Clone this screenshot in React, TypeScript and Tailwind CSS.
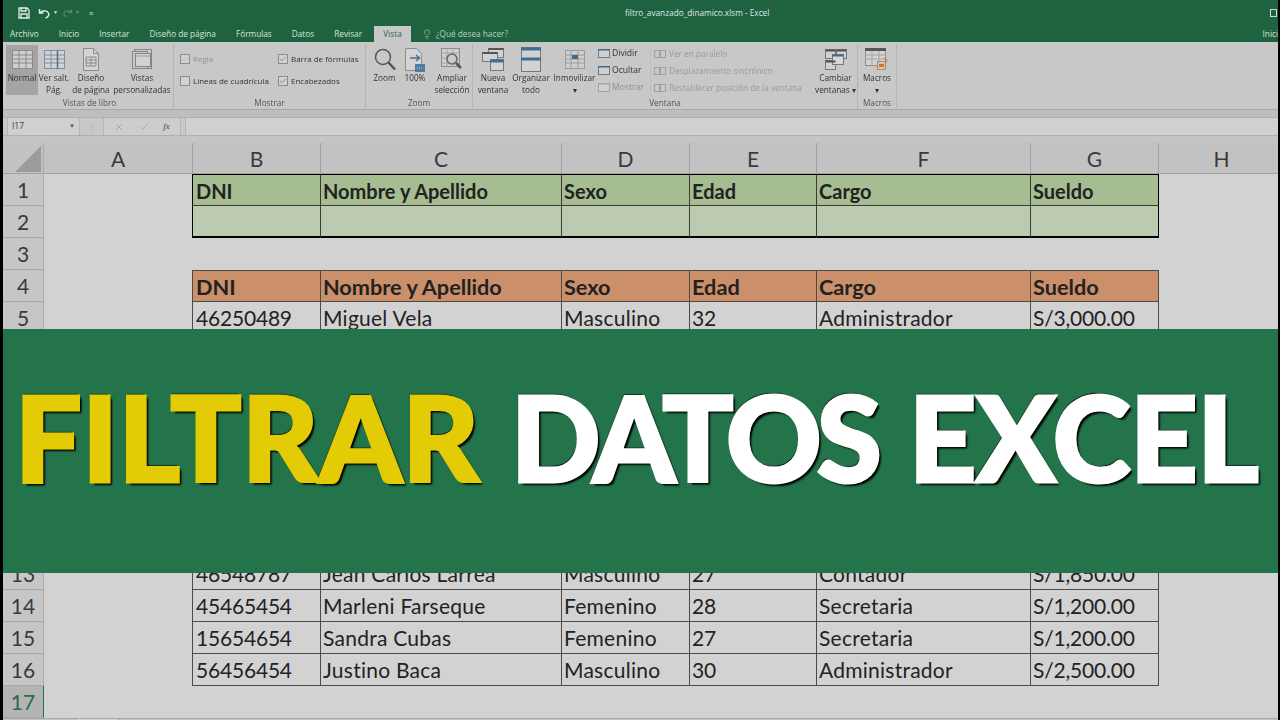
import type { ReactNode } from 'react';
import { Lightbulb, X, Check } from 'lucide-react';

const tabs = ['Archivo', 'Inicio', 'Insertar', 'Diseño de página', 'Fórmulas', 'Datos', 'Revisar'];
const colHeads = ['A', 'B', 'C', 'D', 'E', 'F', 'G', 'H'];
const fields = ['DNI', 'Nombre y Apellido', 'Sexo', 'Edad', 'Cargo', 'Sueldo'];
const blank = ['', '', '', '', '', ''];

const people: Record<number, string[]> = {
  5: ['46250489', 'Miguel Vela', 'Masculino', '32', 'Administrador', 'S/3,000.00'],
  13: ['46548787', 'Jean Carlos Larrea', 'Masculino', '27', 'Contador', 'S/1,850.00'],
  14: ['45465454', 'Marleni Farseque', 'Femenino', '28', 'Secretaria', 'S/1,200.00'],
  15: ['15654654', 'Sandra Cubas', 'Femenino', '27', 'Secretaria', 'S/1,200.00'],
  16: ['56456454', 'Justino Baca', 'Masculino', '30', 'Administrador', 'S/2,500.00'],
};

const gridCols = 'grid grid-cols-[41px_149px_128px_241px_128px_127px_214px_128px_126px]';

function RibbonGroup({ label, width, children }: { label: string; width: string; children: ReactNode }) {
  return (
    <div className={width + ' flex flex-col border-r border-[#b4b4b4] h-[65px]'}>
      <div className="flex-1 flex min-h-0">{children}</div>
      <div className="text-center text-[8.2px] leading-[12px] text-[#555]">{label}</div>
    </div>
  );
}

function RibbonButton({ icon, lines, width, active }: { icon: ReactNode; lines: string[]; width: string; active?: boolean }) {
  return (
    <div className={width + ' h-[50px] mt-[1px] flex flex-col items-center pt-[2px] ' + (active ? 'bg-[#a4a4a4]' : '')}>
      <div className="h-[25px] shrink-0 flex items-center justify-center">{icon}</div>
      <div className="shrink-0 text-[8.2px] leading-[12px] text-center text-[#333] whitespace-nowrap">
        {lines.map((l) => (
          <div key={l}>{l}</div>
        ))}
      </div>
    </div>
  );
}

function CheckRow({ label, checked, dim }: { label: string; checked: boolean; dim?: boolean }) {
  return (
    <div className={'flex items-center gap-[3px] text-[8px] leading-[12px] whitespace-nowrap ' + (dim ? 'text-[#8f8f8f]' : 'text-[#333]')}>
      <div className="w-[10px] h-[10px] border border-[#8c8c8c] bg-[#d2d2d2] flex items-center justify-center">
        {checked && <Check size={8} strokeWidth={1.5} className={dim ? 'text-[#999]' : 'text-[#444]'} />}
      </div>
      {label}
    </div>
  );
}

function PaneIcon({ dim }: { dim?: boolean }) {
  return (
    <svg width="12" height="11" viewBox="0 0 12 11" fill="none">
      <rect x="0.5" y="1.5" width="11" height="8" stroke={dim ? '#a0a0a0' : '#777'} fill="#d0d0d0" />
      <rect x="0" y="1" width="12" height="1.5" fill={dim ? '#a8a8a8' : '#45688a'} />
    </svg>
  );
}

function SheetIcon() {
  return (
    <svg width="23" height="21" viewBox="0 0 23 21" fill="none" stroke="#8a8a8a">
      <rect x="1.5" y="1.5" width="20" height="18" fill="#cfcfcf" />
      <path d="M1.5 6h20M1.5 10h20M1.5 14h20M8 1.5v18M15 1.5v18" />
    </svg>
  );
}

function BreakIcon() {
  return (
    <svg width="23" height="21" viewBox="0 0 23 21" fill="none" stroke="#7f8ea0">
      <rect x="1.5" y="1.5" width="20" height="18" fill="#d4d4d4" />
      <path d="M1.5 6h20M1.5 10h20M1.5 14h20M8 1.5v18" />
      <path d="M14.5 1.5v18" stroke="#4d6f92" strokeWidth="1.5" />
    </svg>
  );
}

function PageIcon() {
  return (
    <svg width="18" height="25" viewBox="0 0 18 25" fill="none" stroke="#8c8c8c">
      <path d="M1.5 1.5h10l5 5v17h-15z" fill="#d4d4d4" />
      <path d="M11.5 1.5v5h5" />
      <path d="M4 10h10v9H4zM4 13h10M4 16h10M9 10v9" />
    </svg>
  );
}

function CustomViewIcon() {
  return (
    <svg width="22" height="23" viewBox="0 0 22 23" fill="none" stroke="#858585">
      <rect x="3.5" y="1.5" width="17" height="19" />
      <rect x="1.5" y="3.5" width="15" height="17" fill="#c8c8c8" />
      <rect x="4.5" y="5.5" width="15" height="13" fill="#d2d2d2" />
      <path d="M4.5 8h15" stroke="#9a9a9a" />
    </svg>
  );
}

function HundredIcon() {
  return (
    <svg width="22" height="26" viewBox="0 0 22 26" fill="none">
      <path d="M1.5 1.5h11l5 5v17h-16z" fill="#d4d4d4" stroke="#8c8c8c" />
      <path d="M6 11h9M12 8l3.5 3-3.5 3" stroke="#3f6d96" strokeWidth="1.5" />
      <rect x="11" y="17" width="10" height="8" fill="#4f7ba3" />
      <path d="M13 21h6" stroke="#d4d4d4" strokeDasharray="1 1" />
    </svg>
  );
}

function ZoomSelIcon() {
  return (
    <svg width="24" height="25" viewBox="0 0 24 25" fill="none">
      <rect x="1.5" y="1.5" width="18" height="18" stroke="#8c8c8c" fill="#cfcfcf" />
      <path d="M1.5 6h18M1.5 11h18M1.5 16h18M7 1.5v18M13 1.5v18" stroke="#a5a5a5" />
      <circle cx="12" cy="12" r="5" stroke="#666" strokeWidth="1.5" fill="#c4ccd4" />
      <path d="M16 16l5 5" stroke="#555" strokeWidth="2.5" />
    </svg>
  );
}

function NewWindowIcon() {
  return (
    <svg width="24" height="25" viewBox="0 0 24 25" fill="none" stroke="#777">
      <rect x="7.5" y="1.5" width="15" height="9" fill="#d2d2d2" />
      <rect x="1.5" y="5.5" width="15" height="9" fill="#d2d2d2" />
      <rect x="9.5" y="12.5" width="13" height="11" fill="#d2d2d2" />
      <path d="M7.5 2h15M1.5 6h15" stroke="#555" strokeWidth="2" />
      <path d="M9.5 14h13" stroke="#3f6d96" strokeWidth="3" />
    </svg>
  );
}

function ArrangeIcon() {
  return (
    <svg width="20" height="25" viewBox="0 0 20 25" fill="none" stroke="#777">
      <rect x="0.5" y="0.5" width="19" height="24" fill="#d2d2d2" />
      <path d="M0 2h20M0 12h20" stroke="#3f6d96" strokeWidth="3" />
    </svg>
  );
}

function FreezeIcon() {
  return (
    <svg width="22" height="22" viewBox="0 0 22 22" fill="none" stroke="#9a9a9a">
      <rect x="1.5" y="1.5" width="19" height="18" fill="#cfcfcf" />
      <path d="M1.5 6h19M1.5 10h19M1.5 14h19M7 1.5v18M14 1.5v18" />
      <rect x="8" y="6" width="6" height="4" fill="#45688a" stroke="none" />
    </svg>
  );
}

function SwitchIcon() {
  return (
    <svg width="24" height="24" viewBox="0 0 24 24" fill="none" stroke="#777">
      <rect x="1.5" y="1.5" width="10" height="9" fill="#d2d2d2" />
      <rect x="12.5" y="1.5" width="10" height="9" fill="#d2d2d2" />
      <rect x="1.5" y="12.5" width="10" height="9" fill="#d2d2d2" />
      <rect x="8.5" y="6.5" width="11" height="10" fill="#d8d8d8" />
      <path d="M1.5 2.5h10M12.5 2.5h10M1.5 13.5h10" stroke="#555" strokeWidth="2" />
      <path d="M8.5 7.5h11" stroke="#3f6d96" strokeWidth="2" />
    </svg>
  );
}

function MacroIcon() {
  return (
    <svg width="26" height="25" viewBox="0 0 26 25" fill="none">
      <rect x="1.5" y="1.5" width="20" height="17" stroke="#8c8c8c" fill="#d2d2d2" />
      <path d="M1 2.5h21" stroke="#555" strokeWidth="3" />
      <path d="M1.5 8h20M1.5 12h20M8 4v15M15 4v15" stroke="#a5a5a5" />
      <rect x="13.5" y="14.5" width="8" height="8" fill="#c8c8c8" stroke="#b98a5a" />
      <rect x="15" y="17" width="5" height="3" fill="#c8773a" />
      <path d="M20 11l3 2-2 4" stroke="#c8773a" />
    </svg>
  );
}

function SplitGlyph() {
  return (
    <svg width="12" height="10" viewBox="0 0 12 10" fill="none" stroke="#a0a0a0">
      <rect x="0.5" y="1.5" width="5" height="7" />
      <rect x="6.5" y="1.5" width="5" height="7" />
    </svg>
  );
}

function Ribbon() {
  return (
    <div className="h-[67px] shrink-0 bg-[#c8c8c8] flex items-start pt-[2px] pl-[3px] font-['Open_Sans',sans-serif] blur-[0.3px]">
      <RibbonGroup label="Vistas de libro" width="w-[168px]">
        <RibbonButton width="w-[32px]" active icon={<SheetIcon />} lines={['Normal']} />
        <RibbonButton width="w-[32px]" icon={<BreakIcon />} lines={['Ver salt.', 'Pág.']} />
        <RibbonButton width="w-[42px]" icon={<PageIcon />} lines={['Diseño', 'de página']} />
        <RibbonButton width="w-[60px]" icon={<CustomViewIcon />} lines={['Vistas', 'personalizadas']} />
      </RibbonGroup>

      <RibbonGroup label="Mostrar" width="w-[192px]">
        <div className="grid grid-cols-[98px_1fr] gap-y-[10px] pl-[6px] pt-[9px] content-start">
          <CheckRow label="Regla" checked dim />
          <CheckRow label="Barra de fórmulas" checked />
          <CheckRow label="Líneas de cuadrícula" checked={false} />
          <CheckRow label="Encabezados" checked />
        </div>
      </RibbonGroup>

      <RibbonGroup label="Zoom" width="w-[107px]">
        <div className="flex pl-[6px] gap-[6px]">
          <RibbonButton
            width="w-[25px]"
            icon={
              <svg width="24" height="25" viewBox="0 0 24 25" fill="none" stroke="#555">
                <circle cx="10" cy="10" r="7.5" strokeWidth="1.5" />
                <path d="M15.5 15.5l6.5 7" strokeWidth="2.5" />
              </svg>
            }
            lines={['Zoom']}
          />
          <RibbonButton width="w-[24px]" icon={<HundredIcon />} lines={['100%']} />
          <RibbonButton width="w-[38px]" icon={<ZoomSelIcon />} lines={['Ampliar', 'selección']} />
        </div>
      </RibbonGroup>

      <RibbonGroup label="Ventana" width="w-[385px]">
        <div className="flex pl-[4px] gap-[3px]">
          <RibbonButton width="w-[32px]" icon={<NewWindowIcon />} lines={['Nueva', 'ventana']} />
          <RibbonButton width="w-[38px]" icon={<ArrangeIcon />} lines={['Organizar', 'todo']} />
          <RibbonButton width="w-[43px]" icon={<FreezeIcon />} lines={['Inmovilizar', '▾']} />
        </div>
        <div className="w-[54px] flex flex-col gap-[6px] pl-[2px] pt-[4px] text-[8.6px] leading-[11px] text-[#333]">
          <div className="flex items-center gap-[2px]"><PaneIcon />Dividir</div>
          <div className="flex items-center gap-[2px]"><PaneIcon />Ocultar</div>
          <div className="flex items-center gap-[2px] text-[#8f8f8f]"><PaneIcon dim />Mostrar</div>
        </div>
        <div className="w-[161px] flex flex-col gap-[6px] pt-[4px] text-[8.25px] leading-[11px] text-[#9a9a9a] whitespace-nowrap border-l border-[#c0c0c0] pl-[3px] mr-[3px]">
          <div className="flex items-center gap-[3px]"><SplitGlyph />Ver en paralelo</div>
          <div className="flex items-center gap-[3px]"><SplitGlyph />Desplazamiento sincrónico</div>
          <div className="flex items-center gap-[3px]"><SplitGlyph />Restablecer posición de la ventana</div>
        </div>
        <RibbonButton width="w-[43px]" icon={<SwitchIcon />} lines={['Cambiar', 'ventanas ▾']} />
      </RibbonGroup>

      <RibbonGroup label="Macros" width="w-[39px]">
        <RibbonButton width="w-[38px]" icon={<MacroIcon />} lines={['Macros', '▾']} />
      </RibbonGroup>
    </div>
  );
}

function FormulaBar() {
  return (
    <div className="shrink-0 bg-[#c4c4c4]">
      <div className="h-[8px] bg-[#bebebe] border-t border-[#a8a8a8]" />
      <div className="h-[19px] flex font-['Open_Sans',sans-serif] border-y border-[#b0b0b0] bg-[#c8c8c8]">
        <div className="ml-[4px] w-[73px] bg-[#d0d0d0] border-x border-[#b6b6b6] flex items-center justify-between px-[4px] text-[8.5px] text-[#444]">
          I17<span className="text-[6px] text-[#555]">▼</span>
        </div>
        <div className="w-[23px] flex items-center justify-center text-[8px] text-[#999]">⋮</div>
        <div className="w-[78px] bg-[#cdcdcd] border-x border-[#b6b6b6] flex items-center justify-around px-[3px]">
          <X size={10} className="text-[#a0a0a0]" />
          <Check size={10} className="text-[#a0a0a0]" />
          <span className="text-[9px] italic font-['Liberation_Serif',serif] text-[#444]">fx</span>
        </div>
        <div className="w-[4px]" />
        <div className="flex-1 bg-[#d0d0d0] border-l border-[#b6b6b6]" />
      </div>
      <div className="h-[7px]" />
    </div>
  );
}

function ColumnHeader() {
  return (
    <div className={gridCols + " grid-rows-[30px] shrink-0 h-[31px] bg-[#c2c2c2] border-b border-[#a3a3a3] font-['Lato',sans-serif] text-[21px] leading-none text-[#3a3a3a]"}>
      <div className="flex items-end justify-end pr-[2px] pb-[1px] border-r border-[#a9a9a9]">
        <svg width="26" height="26" viewBox="0 0 26 26">
          <polygon points="26,0 26,26 0,26" fill="#9c9c9c" />
        </svg>
      </div>
      {colHeads.map((h) => (
        <div key={h} className="flex items-center justify-center border-r border-[#a3a3a3]">
          {h}
        </div>
      ))}
    </div>
  );
}

function Row({ n, cells, kind, selected }: { n: number; cells?: string[]; kind?: 'filterHead' | 'filter' | 'head' | 'data'; selected?: boolean }) {
  const tone =
    kind === 'filterHead'
      ? 'bg-[#a5bd90] font-bold text-[20px] border-t border-b border-r border-[#3a3a3a] border-t-black'
      : kind === 'filter'
        ? 'bg-[#bccbb0] border-b-2 border-b-black border-r border-r-[#3a3a3a]'
        : kind === 'head'
          ? 'bg-[#cb8f6a] font-bold text-[21.7px] border-t border-b border-r border-[#4a4a4a]'
          : 'bg-[#d2d2d2] text-[21px] border-b border-r border-[#4a4a4a]';

  // rows 6 to 12 lie fully under the banner, so they carry no label
  const label = n >= 6 && n <= 12 ? '' : n;

  return (
    <div className={gridCols + ' grid-rows-[32px] h-[32px]'}>
      <div
        className={
          'flex items-center justify-center text-[21px] leading-none border-b border-r ' +
          (selected
            ? 'bg-[#b4b4b4] text-[#2a6a48] border-r-[#23744a] border-b-[#a9a9a9]'
            : 'bg-[#c6c6c6] text-[#3a3a3a] border-[#a9a9a9]')
        }
      >
        {label}
      </div>
      <div />
      {cells ? (
        cells.map((c, i) => (
          <div
            key={i}
            className={
              tone +
              ' leading-[32px] text-[#222] whitespace-nowrap overflow-hidden ' +
              (kind === 'data' ? (i === 0 || i === 3 || i === 5 ? 'tracking-[-0.2px] ' : 'tracking-[0.25px] ') : '') +
              (i === 0
                ? '-ml-px pl-[3px] border-l ' + (kind === 'filter' || kind === 'filterHead' ? 'border-l-black' : 'border-l-[#4a4a4a]')
                : 'pl-[2px]') +
              (i === 5 && (kind === 'filter' || kind === 'filterHead') ? ' border-r-black' : '')
            }
          >
            {c}
          </div>
        ))
      ) : (
        <div className="col-span-6" />
      )}
      <div />
    </div>
  );
}

function Sheet() {
  const rows = [];
  for (let n = 5; n <= 16; n++) {
    rows.push(<Row key={n} n={n} kind="data" cells={people[n] ?? blank} />);
  }
  return (
    <div className="shrink-0 font-['Lato',sans-serif]">
      <Row n={1} kind="filterHead" cells={fields} />
      <Row n={2} kind="filter" cells={blank} />
      <Row n={3} />
      <Row n={4} kind="head" cells={fields} />
      {rows}
      <Row n={17} selected />
    </div>
  );
}

export default function App() {
  return (
    <div className="relative w-[1280px] h-[720px] overflow-hidden bg-black flex">
      <div className="w-[3px] shrink-0" />
      <div className="flex-1 min-w-0 overflow-hidden flex flex-col bg-[#d2d2d2]">
        {/* Title bar */}
        <div className="h-[26px] shrink-0 bg-[#1f6240] flex items-center font-['Open_Sans',sans-serif] text-[#dfe8e2]">
          <div className="w-[622px] flex items-center gap-[8px] pl-[15px]">
            <svg width="12" height="12" viewBox="0 0 12 12" fill="none" stroke="#e4ece7" strokeWidth="1.3">
              <path d="M1 1h8l2 2v8H1zM3 1v3h5V1M3 11V7h6v4" />
            </svg>
            <svg width="13" height="11" viewBox="0 0 13 11" fill="none" stroke="#e4ece7" strokeWidth="1.4">
              <path d="M1.5 1v4h4M1.5 5C4 2 9 2 10.5 5c1 2.5-1 4.5-3 5" />
            </svg>
            <span className="text-[5px] -ml-[6px]">▼</span>
            <svg width="11" height="10" viewBox="0 0 13 11" fill="none" stroke="#5f9077" strokeWidth="1.2" className="-ml-[4px]">
              <path d="M11.5 1v4h-4M11.5 5C9 2 4 2 2.5 5c-1 2.5 1 4.5 3 5" />
            </svg>
            <span className="text-[5px] text-[#6d9a83] -ml-[6px]">▼</span>
            <span className="text-[7px] leading-[7px] ml-[1px]">≡</span>
          </div>
          <div className="text-[8.25px] whitespace-nowrap">filtro_avanzado_dinamico.xlsm - Excel</div>
          <div className="flex-1 flex justify-end pr-[1px]">
            <svg width="7" height="8" viewBox="0 0 7 8" fill="none" stroke="#c9d8cf"><rect x="0.5" y="0.5" width="6" height="7" /></svg>
          </div>
        </div>

        {/* Tabs */}
        <div className="h-[16px] shrink-0 bg-[#1f6240] flex items-end font-['Open_Sans',sans-serif] text-[8.25px] text-[#d7e3dc] pl-[7px] whitespace-nowrap">
          <div className="h-full flex items-center gap-[20px] w-[364px]">
            {tabs.map((t) => (
              <span key={t}>{t}</span>
            ))}
          </div>
          <div className="h-[16px] w-[37px] bg-[#c8c8c8] text-[#3f5e4d] flex items-center justify-center">Vista</div>
          <div className="h-full flex items-center gap-[4px] ml-[11px] text-[#b9cfc3]">
            <Lightbulb size={10} strokeWidth={1.5} />
            <span>¿Qué desea hacer?</span>
          </div>
          <div className="h-full flex-1 flex items-center justify-end">Inici</div>
        </div>

        <Ribbon />
        <FormulaBar />
        <ColumnHeader />
        <Sheet />
        <div className="flex-1 flex bg-[#c4c4c4] border-t border-[#a9a9a9]">
          <div className="w-[73px] border-r border-[#a0a0a0]" />
          <div className="w-[42px] bg-[#d2d2d2]" />
          <div className="flex-1 border-l border-[#a0a0a0]" />
        </div>
      </div>
      <div className="w-[2px] shrink-0" />

      {/* Banner over the sheet */}
      <div className="absolute left-[3px] top-[329px] w-[1275px] h-[244px] bg-[#23744a] pl-[12px] pt-[33px] flex items-start font-['Lato',sans-serif] font-black text-[118px] leading-[150px] whitespace-nowrap [text-shadow:-1px_-2px_1px_#000,3px_3px_2px_#000,2px_1px_1px_#000]">
        <span className="text-[#e3cc06] tracking-[0.5px] [-webkit-text-stroke:3px_#e3cc06]">FILTRAR</span>
        <span className="text-white tracking-[-5px] ml-[31px] [-webkit-text-stroke:3px_#ffffff]">DATOS</span>
        <span className="text-white tracking-[-0.4px] ml-[32px] [-webkit-text-stroke:3px_#ffffff]">EXCEL</span>
      </div>
    </div>
  );
}
